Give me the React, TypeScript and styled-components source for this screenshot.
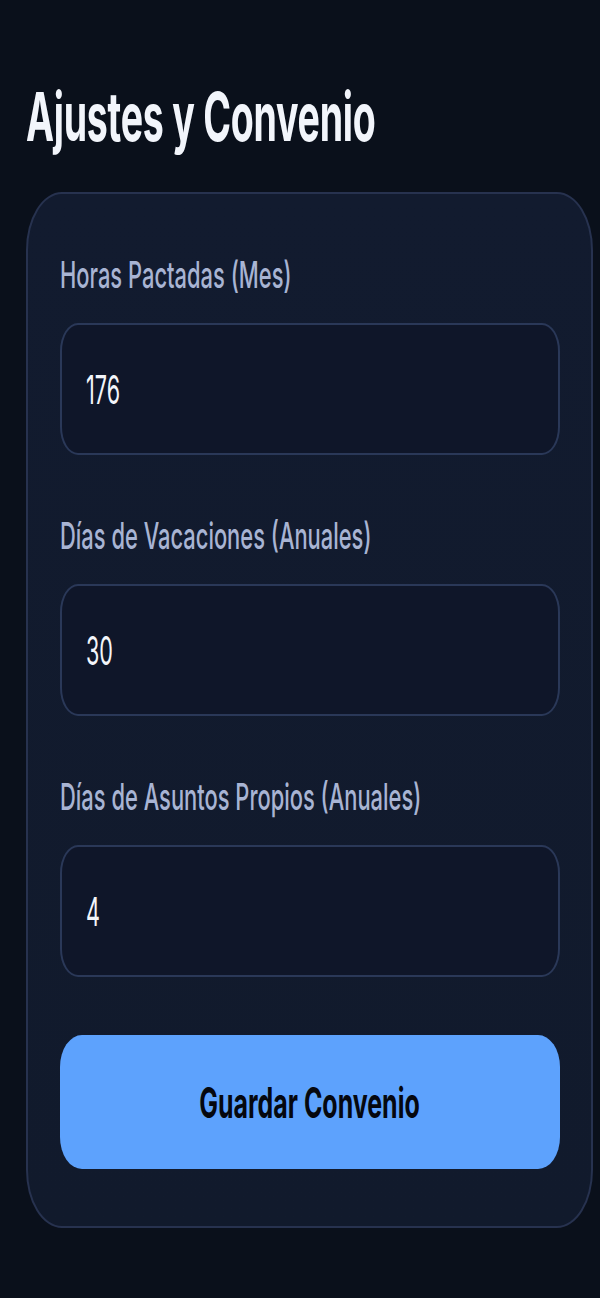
import React from "react";
import styled, { createGlobalStyle } from "styled-components";

const GlobalStyle = createGlobalStyle`
  html, body {
    margin: 0;
    padding: 0;
    background: #0a101b;
  }
  body {
    font-family: "Inter", "Roboto", "Liberation Sans", sans-serif;
    -webkit-font-smoothing: antialiased;
  }
`;

const fields = [
  { id: "horas", label: "Horas Pactadas (Mes)", value: "176" },
  { id: "vacaciones", label: "Días de Vacaciones (Anuales)", value: "30" },
  { id: "asuntos", label: "Días de Asuntos Propios (Anuales)", value: "4" },
];

export default function App() {
  return (
    <>
      <GlobalStyle />
      <Page>
        <Title>
          <Narrow $scale={0.561}>Ajustes y Convenio</Narrow>
        </Title>
        <Card>
          {fields.map((f) => (
            <Field key={f.id}>
              <Label>
                <Narrow $scale={0.592}>{f.label}</Narrow>
              </Label>
              <InputBox>
                <Narrow $scale={0.54}>{f.value}</Narrow>
              </InputBox>
            </Field>
          ))}
          <SaveButton type="button">
            <Narrow $scale={0.594} $center>
              Guardar Convenio
            </Narrow>
          </SaveButton>
        </Card>
      </Page>
    </>
  );
}

const Page = styled.main`
  min-height: 1298px;
  box-sizing: border-box;
  padding: 77px 7px 0 26px;
  background: #0a101b;
  overflow: hidden;
`;

// the reference is horizontally compressed, so text is squeezed to match
const Narrow = styled.span<{ $scale: number; $center?: boolean }>`
  display: inline-block;
  white-space: nowrap;
  transform: scaleX(${(p) => p.$scale});
  transform-origin: ${(p) => (p.$center ? "center" : "left")} center;
`;

const Title = styled.h1`
  margin: 0 0 35px;
  font-size: 67px;
  line-height: 80px;
  font-weight: 700;
  color: #f2f5fb;
  letter-spacing: -0.5px;
  overflow: hidden;
`;

const Card = styled.section`
  display: flex;
  flex-direction: column;
  gap: 59px;
  padding: 59px 31px 57px 32px;
  background: linear-gradient(180deg, #121b2f 0%, #111a2c 100%);
  border: 2px solid #27324f;
  border-radius: 36px / 58px;
`;

const Field = styled.div`
  display: flex;
  flex-direction: column;
  gap: 26px;
`;

const Label = styled.label`
  font-size: 37px;
  line-height: 44px;
  font-weight: 450;
  color: #a8b4d3;
  overflow: hidden;
`;

const InputBox = styled.div`
  display: flex;
  align-items: center;
  height: 132px;
  box-sizing: border-box;
  padding: 0 24px;
  background: #0f1629;
  border: 2px solid #2a3858;
  border-radius: 18px / 28px;
  font-size: 40px;
  color: #f3f5fa;
  overflow: hidden;
`;

const SaveButton = styled.button`
  margin-top: -1px;
  height: 134px;
  border: none;
  border-radius: 22px / 32px;
  background: #5da2fd;
  color: #05080f;
  font-family: inherit;
  font-size: 42px;
  font-weight: 700;
  cursor: pointer;
  overflow: hidden;
`;
